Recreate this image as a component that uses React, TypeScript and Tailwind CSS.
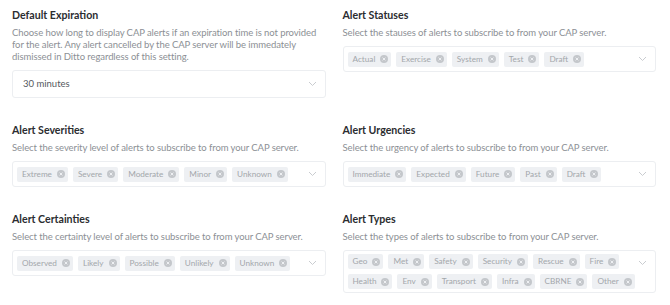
import React from "react";

const Chevron = ({ className = "" }: { className?: string }) => (
  <svg width="9" height="6" viewBox="0 0 9 6" className={"shrink-0 " + className}>
    <path d="M1 1l3.5 3.5L8 1" fill="none" stroke="#c9ccd0" strokeWidth="1" />
  </svg>
);

const XCircle = () => (
  <svg width="8" height="8" viewBox="0 0 8 8" className="shrink-0">
    <circle cx="4" cy="4" r="4" fill="#c4c7cb" />
    <path d="M2.6 2.6l2.8 2.8M5.4 2.6L2.6 5.4" stroke="#eef0f3" strokeWidth="1" />
  </svg>
);

const Chip = ({ label }: { label: string }) => (
  <div className="flex items-center gap-[5px] h-[15px] pl-[5px] pr-[3px] rounded-[2px] bg-[#eef0f3] text-[8.2px] text-[#a3a7ab]">
    <span>{label}</span>
    <XCircle />
  </div>
);

const Field = ({
  title,
  desc,
  children,
}: {
  title: string;
  desc: string;
  children: React.ReactNode;
}) => (
  <div className="flex flex-col">
    <div className="text-[10.6px] leading-[14px] font-bold text-[#2b2d30]">{title}</div>
    <div className="mt-[5px] text-[9.5px] tracking-[-0.08px] leading-[12px] text-[#8c9095]">{desc}</div>
    <div className="mt-[7px]">{children}</div>
  </div>
);

const Multi = ({ items, top = false }: { items: string[]; top?: boolean }) => (
  <div
    className={
      "flex border border-[#eceef1] rounded-[3px] bg-white pl-[4px] pr-[8px] py-[3px] min-h-[26px] " +
      (top ? "items-start" : "items-center")
    }
  >
    <div className="flex flex-wrap gap-x-[5px] gap-y-[5px] flex-1">
      {items.map((i) => (
        <Chip key={i} label={i} />
      ))}
    </div>
    <Chevron className={top ? "mt-[6px]" : ""} />
  </div>
);

export default function App() {
  return (
    <div
      className="w-[670px] h-[305px] bg-white overflow-hidden pl-[12px] pr-[14px] pt-[8px]"
      style={{ fontFamily: "Lato, 'Noto Sans', sans-serif" }}
    >
      <div className="grid grid-cols-2 gap-x-[17px] gap-y-[25px] items-start">
        <Field
          title="Default Expiration"
          desc="Choose how long to display CAP alerts if an expiration time is not provided for the alert. Any alert cancelled by the CAP server will be immedately dismissed in Ditto regardless of this setting."
        >
          <div className="flex items-center justify-between h-[28px] border border-[#eceef1] rounded-[3px] pl-[10px] pr-[8px] text-[9.5px] text-[#55595e]">
            <span>30 minutes</span>
            <Chevron />
          </div>
        </Field>
        <Field title="Alert Statuses" desc="Select the stauses of alerts to subscribe to from your CAP server.">
          <Multi items={["Actual", "Exercise", "System", "Test", "Draft"]} />
        </Field>
        <Field title="Alert Severities" desc="Select the severity level of alerts to subscribe to from your CAP server.">
          <Multi items={["Extreme", "Severe", "Moderate", "Minor", "Unknown"]} />
        </Field>
        <Field title="Alert Urgencies" desc="Select the urgency of alerts to subscribe to from your CAP server.">
          <Multi items={["Immediate", "Expected", "Future", "Past", "Draft"]} />
        </Field>
        <Field title="Alert Certainties" desc="Select the certainty level of alerts to subscribe to from your CAP server.">
          <Multi items={["Observed", "Likely", "Possible", "Unlikely", "Unknown"]} />
        </Field>
        <Field title="Alert Types" desc="Select the types of alerts to subscribe to from your CAP server.">
          <Multi
            top
            items={["Geo", "Met", "Safety", "Security", "Rescue", "Fire", "Health", "Env", "Transport", "Infra", "CBRNE", "Other"]}
          />
        </Field>
      </div>
    </div>
  );
}
